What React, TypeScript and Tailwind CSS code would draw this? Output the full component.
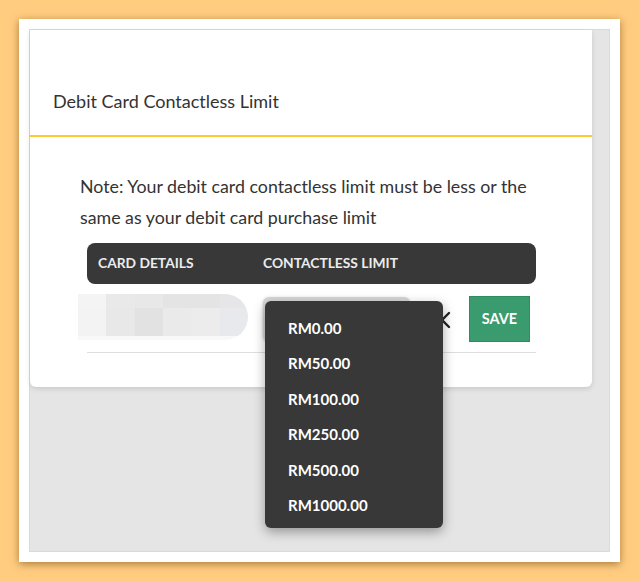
import { useState } from "react";

const limits = ["RM0.00", "RM50.00", "RM100.00", "RM250.00", "RM500.00", "RM1000.00"];

// pixelated, blurred card preview (masked card number)
const blurTop = ["#f4f4f4", "#e9e9e9", "#e8e8e8", "#e4e4e4", "#e4e4e4", "#e6e6e8"];
const blurMid = ["#f3f3f3", "#e8e8e8", "#e2e2e2", "#eaeaea", "#ececec", "#e8e9ec"];

function BlurredCard() {
  return (
    <div className="-ml-[9px] flex h-[46px] w-[170px] shrink-0 flex-col overflow-hidden rounded-r-full blur-[0.6px]">
      <div className="flex h-[14px]">
        {blurTop.map((c, i) => (
          <div key={i} className="flex-1" style={{ background: c }} />
        ))}
      </div>
      <div className="flex h-[28px]">
        {blurMid.map((c, i) => (
          <div key={i} className="flex-1" style={{ background: c }} />
        ))}
      </div>
      <div className="h-[4px] bg-[#f8f8f8]" />
    </div>
  );
}

function LimitDropdown() {
  const [selected, setSelected] = useState<string | null>(null);
  return (
    <div className="absolute left-[2px] top-[8px] z-10 w-[178px] rounded-md bg-[#383838] pt-[9px] pb-[5px] shadow-[0_4px_12px_rgba(0,0,0,0.35)]">
      {limits.map((l) => (
        <button
          key={l}
          onClick={() => setSelected(l)}
          className={`flex h-[35.5px] w-full items-center pl-[23px] text-left text-[15px] font-bold text-white ${
            selected === l ? "bg-[#444]" : ""
          }`}
        >
          {l}
        </button>
      ))}
    </div>
  );
}

export default function App() {
  return (
    <div className="min-h-[581px] bg-[#ffcc80] p-[19px] font-['Lato',sans-serif] text-[#333]">
      <div className="h-[543px] bg-white p-[10px] shadow-[0_2px_8px_rgba(110,70,10,0.6)]">
        <div className="h-full border border-[#dadada] bg-[#e5e5e5] pr-[17px]">
          <div className="h-[357px] rounded-b-md bg-white shadow-[0_2px_5px_rgba(0,0,0,0.12)]">
            {/* Header */}
            <div className="h-[107px] border-b-2 border-[#fcc935] pl-[23px] pt-[59px]">
              <h1 className="text-[18px] leading-[24px]">Debit Card Contactless Limit</h1>
            </div>

            {/* Body */}
            <div className="pl-[50px] pr-[50px] pt-[34px]">
              <p className="text-[17.8px] leading-[31px]">
                Note: Your debit card contactless limit must be less or the same as your debit
                card purchase limit
              </p>
            </div>

            <div className="ml-[57px] mt-[10px] w-[449px]">
              <div className="flex h-[41px] items-center rounded-lg bg-[#383838] px-[11px] text-[13.8px] font-bold uppercase text-[#ececec]">
                <span className="w-[165px]">Card Details</span>
                <span>Contactless Limit</span>
              </div>

              <div className="flex h-[69px] items-center border-b border-[#dedede] pb-[2px]">
                <BlurredCard />
                <div className="relative z-10 ml-[15px]">
                  <div className="mt-[4px] h-[44px] w-[147px] rounded-md bg-[#d6d6d6] shadow-[0_1px_3px_rgba(0,0,0,0.25)]" />
                  <LimitDropdown />
                </div>
                <svg
                  className="ml-[23px] mt-[6px] shrink-0 text-[#222]"
                  width="18"
                  height="18"
                  viewBox="0 0 18 18"
                  fill="none"
                  stroke="currentColor"
                  strokeWidth="2.4"
                  strokeLinecap="round"
                >
                  <path d="M2 2l14 14M16 2L2 16" />
                </svg>
                <button className="ml-[18px] mt-[4px] h-[46px] w-[61px] shrink-0 border border-[#2f8c60] bg-[#3a9b6e] text-[14.5px] font-bold text-white">
                  SAVE
                </button>
              </div>
            </div>
          </div>
        </div>
      </div>
    </div>
  );
}
